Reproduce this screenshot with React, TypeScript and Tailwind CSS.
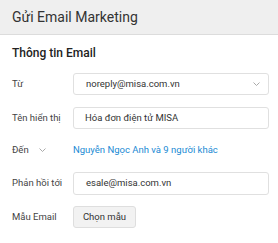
import React from "react";

const Chevron = () => (
  <svg width="7" height="4" viewBox="0 0 7 4" fill="none">
    <path d="M0.5 0.5 L3.5 3.5 L6.5 0.5" stroke="#a0a0a0" strokeWidth="0.9" />
  </svg>
);

export default function App() {
  return (
    <div className="w-[278px] h-[243px] bg-white overflow-hidden" style={{ fontFamily: "Roboto, 'Noto Sans', sans-serif" }}>
      <div className="h-[35px] bg-[#efefef] border-b border-[#dcdcdc] flex items-center pl-[12px] text-[14px] text-[#333]">
        Gửi Email Marketing
      </div>
      <div className="pl-[12px] pr-[9px]">
        <div className="mt-[9px] text-[12px] font-medium text-[#222] leading-[18px]">Thông tin Email</div>
        <div className="mt-[11px] flex items-center h-[22px]">
          <div className="w-[61px] text-[9.5px] text-[#444]">Từ</div>
          <div className="flex-1 h-[22px] border border-[#e0e0e0] rounded-[3px] flex items-center pl-[12px] pr-[8px] text-[9.5px] text-[#333]">
            <span className="flex-1">noreply@misa.com.vn</span>
            <Chevron />
          </div>
        </div>
        <div className="mt-[12px] flex items-center h-[22px]">
          <div className="w-[61px] text-[9.5px] text-[#444]">Tên hiển thị</div>
          <div className="flex-1 h-[22px] border border-[#e0e0e0] rounded-[3px] flex items-center pl-[11px] text-[9.5px] text-[#333]">
            Hóa đơn điện tử MISA
          </div>
        </div>
        <div className="mt-[11px] flex items-center h-[20px]">
          <div className="w-[61px] text-[9.5px] text-[#444] flex items-center gap-[10px]">
            <span>Đến</span>
            <Chevron />
          </div>
          <div className="text-[9.5px] text-[#1a8ad4]">Nguyễn Ngọc Anh và 9 người khác</div>
        </div>
        <div className="mt-[12px] flex items-center h-[23px]">
          <div className="w-[61px] text-[9.5px] text-[#444]">Phản hồi tới</div>
          <div className="flex-1 h-[23px] border border-[#e0e0e0] rounded-[3px] flex items-center pl-[12px] text-[9.5px] text-[#333]">
            esale@misa.com.vn
          </div>
        </div>
        <div className="mt-[11px] flex items-center h-[22px]">
          <div className="w-[61px] text-[9.5px] text-[#444]">Mẫu Email</div>
          <div className="w-[63px] h-[22px] bg-[#f2f2f2] border border-[#dedede] rounded-[3px] flex items-center justify-center text-[9.5px] text-[#333]">
            Chọn mẫu
          </div>
        </div>
      </div>
    </div>
  );
}
